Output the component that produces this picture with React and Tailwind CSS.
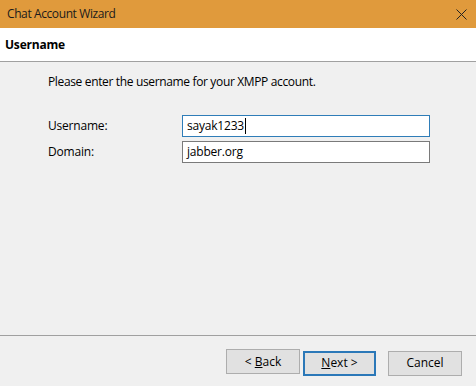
import React from "react";

const font = { fontFamily: '"Open Sans", "Noto Sans", sans-serif' };

function WizardButton({ children, primary }) {
  return (
    <button
      className={
        primary
          ? "w-[73px] h-[25px] bg-[#e1e1e1] border-2 border-[#2b78b8] text-[12px] text-black leading-none"
          : "w-[74px] h-[25px] bg-[#e1e1e1] border border-[#adadad] text-[12px] text-black leading-none"
      }
    >
      {children}
    </button>
  );
}

export default function App() {
  return (
    <div
      className="w-[476px] h-[386px] flex flex-col bg-[#f0f0f0] text-black overflow-hidden"
      style={font}
    >
      {/* title bar */}
      <div className="h-[28px] shrink-0 bg-[#e09a3c] flex items-center justify-between pl-[7px] pr-[8px]">
        <span className="text-[12px] text-[#1b1b1b] tracking-[-0.4px]">Chat Account Wizard</span>
        <svg width="11" height="11" viewBox="0 0 11 11" className="mr-[1px]">
          <path d="M0.5 0.5 L10.5 10.5 M10.5 0.5 L0.5 10.5" stroke="#222" strokeWidth="1" fill="none" />
        </svg>
      </div>

      {/* page header */}
      <div className="h-[34px] shrink-0 bg-white border-b border-[#a0a0a0] flex items-center pl-[5px]">
        <span className="text-[12px] font-bold tracking-[-0.2px]">Username</span>
      </div>

      {/* body */}
      <div className="flex-1 pl-[48px] pt-[12px]">
        <p className="text-[12px] leading-[16px] tracking-[-0.35px]">
          Please enter the username for your XMPP account.
        </p>
        <div className="mt-[25px] grid grid-cols-[134px_248px] gap-y-[4px] items-center">
          <span className="text-[12px] tracking-[-0.2px]">Username:</span>
          <div className="h-[22px] bg-white border border-[#2f7db8] flex items-center pl-[4px] text-[12px] tracking-[-0.2px]">
            sayak1233
            <span className="inline-block w-px h-[16px] bg-black ml-[1px]" />
          </div>
          <span className="text-[12px] tracking-[-0.2px]">Domain:</span>
          <div className="h-[22px] bg-white border border-[#7a7a7a] flex items-center pl-[4px] text-[12px] tracking-[-0.2px]">
            jabber.org
          </div>
        </div>
      </div>

      {/* footer */}
      <div className="h-[51px] shrink-0 border-t border-[#a0a0a0] flex items-start justify-end pt-[13px] pr-[14px]">
        <WizardButton>
          &lt; <span className="underline">B</span>ack
        </WizardButton>
        <div className="ml-[3px]">
          <WizardButton primary>
            <span className="underline">N</span>ext &gt;
          </WizardButton>
        </div>
        <div className="ml-[12px]">
          <WizardButton>Cancel</WizardButton>
        </div>
      </div>
    </div>
  );
}
